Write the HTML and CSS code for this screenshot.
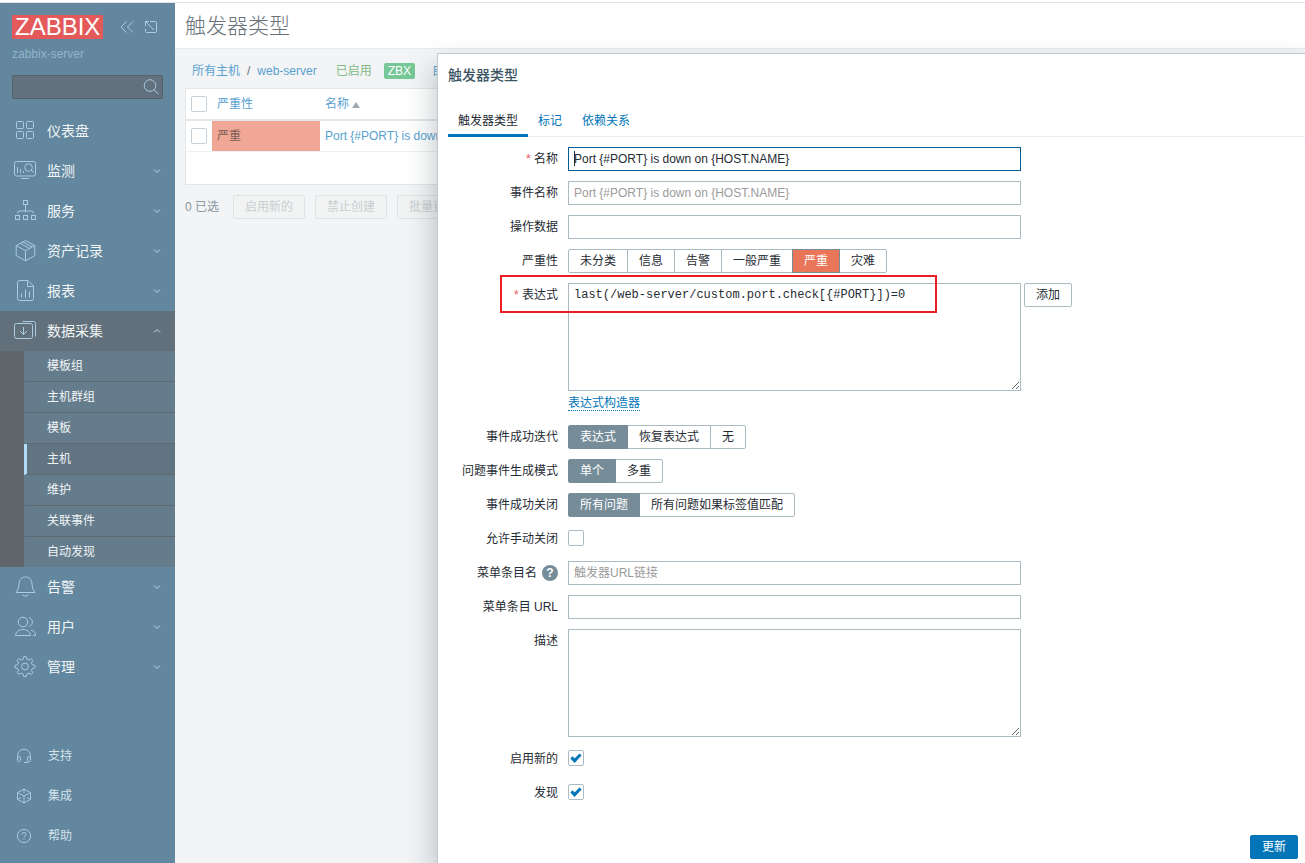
FILE: index.html
```html
<!DOCTYPE html>
<html lang="zh-CN">
<head>
<meta charset="utf-8">
<title>触发器类型</title>
<link rel="stylesheet" href="styles.css">
</head>
<body>
<div class="app">
  <aside class="sidebar">
    <div class="brand">
      <a class="logo" href="#">ZABBIX</a>
      <button class="icon-button" type="button" aria-label="收起">
        <svg width="16" height="16" viewBox="0 0 16 16"><path d="M7.500 2.500 2 8l5.500 5.500M14 2.500 8.500 8l5.500 5.500"/></svg>
      </button>
      <button class="icon-button" type="button" aria-label="隐藏">
        <svg width="16" height="16" viewBox="0 0 16 16"><path d="M7 2.500h5.500q1 0 1 1v9q0 1-1 1h-9q-1 0-1-1V10M11 11 2.500 2.500M2.500 7V2.500H6"/></svg>
      </button>
    </div>
    <div class="server-name">zabbix-server</div>
    <form class="search">
      <input type="text" aria-label="搜索">
      <button type="button" aria-label="搜索">
        <svg width="18" height="18" viewBox="0 0 18 18"><circle cx="8" cy="7.500" r="5.800"/><path d="m12 12 4.500 4"/></svg>
      </button>
    </form>

    <nav class="menu">
      <a class="menu-item" href="#">
        <svg class="menu-icon" viewBox="0 0 22 22"><rect x="2.500" y="1.500" width="7" height="7" rx="1"/><rect x="12.500" y="1.500" width="7" height="7" rx="1"/><rect x="2.500" y="11.500" width="7" height="7" rx="1"/><rect x="12.500" y="11.500" width="7" height="7" rx="1"/></svg>
        <span>仪表盘</span>
      </a>
      <a class="menu-item" href="#">
        <svg class="menu-icon" viewBox="0 0 22 22"><rect x=".5" y="1.500" width="21" height="14.500" rx="2"/><path d="M7 18.500h8M3.500 7v6M6.500 9v4M9.500 11v2M17.500 10l2 2.500"/><circle cx="14.500" cy="7.500" r="3.800"/></svg>
        <span>监测</span>
        <svg class="chevron" viewBox="0 0 8 8"><path d="m1 2.500 3 3 3-3"/></svg>
      </a>
      <a class="menu-item" href="#">
        <svg class="menu-icon" viewBox="0 0 22 22"><rect x="9.500" y=".5" width="4" height="4"/><rect x="1.500" y="15.500" width="4" height="4"/><rect x="9.500" y="15.500" width="4" height="4"/><rect x="17.500" y="15.500" width="4" height="4"/><path d="M11.500 4.500v8M3.500 13.500v-.5q0-2 2-2h12q2 0 2 2v.5"/></svg>
        <span>服务</span>
        <svg class="chevron" viewBox="0 0 8 8"><path d="m1 2.500 3 3 3-3"/></svg>
      </a>
      <a class="menu-item" href="#">
        <svg class="menu-icon" viewBox="0 0 22 22"><path d="m11.500 .6 9.300 5v10l-9.300 5.200-9.300-5.200v-10zM2.200 5.600l9.300 5 9.300-5M11.500 10.600v10M6.200 3.400 15.500 8.400M9 2l9.200 5"/></svg>
        <span>资产记录</span>
        <svg class="chevron" viewBox="0 0 8 8"><path d="m1 2.500 3 3 3-3"/></svg>
      </a>
      <a class="menu-item" href="#">
        <svg class="menu-icon" viewBox="0 0 22 22"><path d="M5.500 .5h8.500l5.500 5.500v12.500q0 2-2 2h-12q-2 0-2-2v-16q0-2 2-2zM13.500 1v5.500h6M7.500 13.500v4M11.500 9.500v8M15.500 11.500v6"/></svg>
        <span>报表</span>
        <svg class="chevron" viewBox="0 0 8 8"><path d="m1 2.500 3 3 3-3"/></svg>
      </a>
      <a class="menu-item menu-item-open" href="#">
        <svg class="menu-icon" viewBox="0 0 22 22"><rect x=".5" y="3.500" width="18" height="15" rx="2"/><path d="M8.500 1.500h11q2 0 2 2v13M9.500 7v7.500M6 11l3.500 3.500 3.500-3.500"/></svg>
        <span>数据采集</span>
        <svg class="chevron" viewBox="0 0 8 8"><path d="m1 5.500 3-3 3 3"/></svg>
      </a>
      <div class="submenu">
        <a href="#">模板组</a>
        <a href="#">主机群组</a>
        <a href="#">模板</a>
        <a class="selected" href="#">主机</a>
        <a href="#">维护</a>
        <a href="#">关联事件</a>
        <a href="#">自动发现</a>
      </div>
      <a class="menu-item" href="#">
        <svg class="menu-icon" viewBox="0 0 22 22"><path d="M2 16.500h19c-2-2.500-2.500-4-3-8.500-.5-5-3-7-6.500-7s-6 2-6.500 7c-.5 4.500-1 6-3 8.500zM8.500 19q3 2.500 6 0"/></svg>
        <span>告警</span>
        <svg class="chevron" viewBox="0 0 8 8"><path d="m1 2.500 3 3 3-3"/></svg>
      </a>
      <a class="menu-item" href="#">
        <svg class="menu-icon" viewBox="0 0 22 22"><circle cx="9" cy="6" r="4.800"/><path d="M1.500 19.500c.5-4 3.500-6 7.500-6s7 2 7.500 6zM15 1.500c4.500 1.500 4.500 7.500 0 9M17 14c3 .8 4.500 2.500 4.500 5.500h-2.500"/></svg>
        <span>用户</span>
        <svg class="chevron" viewBox="0 0 8 8"><path d="m1 2.500 3 3 3-3"/></svg>
      </a>
      <a class="menu-item" href="#">
        <svg class="menu-icon" viewBox="0 0 22 22"><circle cx="11" cy="10.500" r="3.400"/><path d="M9.800 .6h2.400l.7 2.700 1.900.8 2.400-1.400 1.700 1.700-1.400 2.400.8 1.900 2.700.7v2.400l-2.700.7-.8 1.900 1.400 2.400-1.700 1.700-2.400-1.400-1.900.8-.7 2.700H9.800l-.7-2.700-1.900-.8-2.400 1.400-1.700-1.700 1.400-2.400-.8-1.900-2.700-.7V9.400l2.700-.7.800-1.900-1.400-2.400 1.700-1.700 2.400 1.400 1.900-.8z"/></svg>
        <span>管理</span>
        <svg class="chevron" viewBox="0 0 8 8"><path d="m1 2.500 3 3 3-3"/></svg>
      </a>
    </nav>

    <nav class="support-menu">
      <a href="#">
        <svg viewBox="0 0 16 16"><path d="M1.700 11V7.500a6.300 6.300 0 0 1 12.600 0V11M1.500 9.500q0-1 1-1h1q1 0 1 1v3q0 1-1 1h-1q-1 0-1-1zM11.500 9.500q0-1 1-1h1q1 0 1 1v3q0 1-1 1h-1q-1 0-1-1zM13 13.500q-1.500 1.500-5 1"/></svg>
        <span>支持</span>
      </a>
      <a href="#">
        <svg viewBox="0 0 16 16"><path d="m8 1 6.500 3.500v7L8 15l-6.500-3.500v-7zM1.500 4.500 8 8l6.500-3.500M8 8v7M8 1v4M1.500 11.500 5 9.700M14.500 11.500 11 9.700"/></svg>
        <span>集成</span>
      </a>
      <a href="#">
        <svg viewBox="0 0 16 16"><circle cx="8" cy="8" r="6.600"/><path d="M6 6.500q0-2 2-2t2 1.800c0 1.500-2 1.500-2 3.200M8 10.500v1.300"/></svg>
        <span>帮助</span>
      </a>
    </nav>
  </aside>

  <main class="page">
    <header class="page-header"><h1>触发器类型</h1></header>
    <div class="content">
      <div class="breadcrumbs">
        <a href="#">所有主机</a>
        <span class="slash">/</span>
        <a href="#">web-server</a>
        <span class="status">已启用</span>
        <span class="badge">ZBX</span>
        <a href="#">自</a>
      </div>
      <div class="table-box">
        <table>
          <thead>
            <tr>
              <th class="col-check"><input class="check" type="checkbox" aria-label="全选"></th>
              <th class="col-severity"><a href="#">严重性</a></th>
              <th><a href="#">名称 <span class="sort"></span></a></th>
            </tr>
          </thead>
          <tbody>
            <tr>
              <td class="col-check"><input class="check" type="checkbox" aria-label="选择"></td>
              <td class="severity-high">严重</td>
              <td><a href="#">Port {#PORT} is down on {HOST.NAME}</a></td>
            </tr>
          </tbody>
        </table>
      </div>
      <div class="bulk-actions">
        <span>0 已选</span>
        <button type="button" disabled>启用新的</button>
        <button type="button" disabled>禁止创建</button>
        <button type="button" disabled>批量更新</button>
      </div>
    </div>
  </main>

  <section class="dialog" role="dialog" aria-labelledby="dialog-title">
    <h2 id="dialog-title">触发器类型</h2>
    <div class="tabs">
      <button class="tab tab-active" type="button">触发器类型</button>
      <button class="tab" type="button">标记</button>
      <button class="tab" type="button">依赖关系</button>
    </div>
    <form class="form">
      <div class="row">
        <label class="required" for="name">名称</label>
        <div class="field caret"><input class="text focused" id="name" type="text" value="Port {#PORT} is down on {HOST.NAME}"></div>
      </div>
      <div class="row">
        <label for="event-name">事件名称</label>
        <div class="field"><input class="text" id="event-name" type="text" placeholder="Port {#PORT} is down on {HOST.NAME}"></div>
      </div>
      <div class="row">
        <label for="opdata">操作数据</label>
        <div class="field"><input class="text" id="opdata" type="text"></div>
      </div>
      <div class="row">
        <span class="label" id="severity-label">严重性</span>
        <div class="segments" role="radiogroup" aria-labelledby="severity-label">
          <label><input type="radio" name="severity"><span>未分类</span></label>
          <label><input type="radio" name="severity"><span>信息</span></label>
          <label><input type="radio" name="severity"><span>告警</span></label>
          <label><input type="radio" name="severity"><span>一般严重</span></label>
          <label><input class="high" type="radio" name="severity" checked><span>严重</span></label>
          <label><input type="radio" name="severity"><span>灾难</span></label>
        </div>
      </div>
      <div class="row highlighted">
        <label class="required" for="expression">表达式</label>
        <div class="expression">
          <textarea class="text mono" id="expression" spellcheck="false">last(/web-server/custom.port.check[{#PORT}])=0</textarea>
          <button class="button" type="button">添加</button>
        </div>
        <div class="builder"><a href="#">表达式构造器</a></div>
      </div>
      <div class="row">
        <span class="label" id="recovery-label">事件成功迭代</span>
        <div class="segments" role="radiogroup" aria-labelledby="recovery-label">
          <label><input type="radio" name="recovery" checked><span>表达式</span></label>
          <label><input type="radio" name="recovery"><span>恢复表达式</span></label>
          <label><input type="radio" name="recovery"><span>无</span></label>
        </div>
      </div>
      <div class="row">
        <span class="label" id="mode-label">问题事件生成模式</span>
        <div class="segments" role="radiogroup" aria-labelledby="mode-label">
          <label><input type="radio" name="mode" checked><span>单个</span></label>
          <label><input type="radio" name="mode"><span>多重</span></label>
        </div>
      </div>
      <div class="row">
        <span class="label" id="close-label">事件成功关闭</span>
        <div class="segments" role="radiogroup" aria-labelledby="close-label">
          <label><input type="radio" name="close" checked><span>所有问题</span></label>
          <label><input type="radio" name="close"><span>所有问题如果标签值匹配</span></label>
        </div>
      </div>
      <div class="row">
        <label for="manual-close">允许手动关闭</label>
        <div class="check-field"><input class="check" id="manual-close" type="checkbox"></div>
      </div>
      <div class="row">
        <div class="label with-help"><label for="url-name">菜单条目名</label><button class="help" type="button" aria-label="帮助">?</button></div>
        <div class="field"><input class="text" id="url-name" type="text" placeholder="触发器URL链接"></div>
      </div>
      <div class="row">
        <label for="url">菜单条目 URL</label>
        <div class="field"><input class="text" id="url" type="text"></div>
      </div>
      <div class="row">
        <label for="description">描述</label>
        <div class="field"><textarea class="text" id="description"></textarea></div>
      </div>
      <div class="row">
        <label for="enabled">启用新的</label>
        <div class="check-field"><input class="check" id="enabled" type="checkbox" checked></div>
      </div>
      <div class="row">
        <label for="discover">发现</label>
        <div class="check-field"><input class="check" id="discover" type="checkbox" checked></div>
      </div>
    </form>
    <footer class="dialog-footer"><button class="button primary" type="button">更新</button></footer>
  </section>
</div>
</body>
</html>
```

FILE: styles.css
```css
*,
*::before,
*::after {
  box-sizing: border-box;
}

body {
  margin: 0;
  padding-top: 2px;
  background: #fff;
  color: #1f2c33;
  font: 12px/16px "Liberation Sans", "Noto Sans CJK SC", sans-serif;
}

a {
  color: inherit;
  text-decoration: none;
}

button,
input,
textarea {
  font: inherit;
  color: inherit;
  margin: 0;
}

svg {
  fill: none;
  stroke: currentColor;
  flex: none;
}

.app {
  position: relative;
  display: flex;
  min-height: calc(100vh - 2px);
  border-top: 1px solid #dfe2e5;
  overflow: hidden;
}

/* Sidebar */
.sidebar {
  flex: none;
  width: 175px;
  display: flex;
  flex-direction: column;
  padding: 12px 0 7px;
  background: #62879e;
  color: #a9cde3;
}

.brand {
  display: flex;
  align-items: center;
  padding: 0 16px 0 12px;
}

.logo {
  margin-right: auto;
  padding: 0 3px;
  background: #e45959;
  color: #fff;
  font-size: 24px;
  line-height: 24px;
}

.icon-button {
  display: flex;
  margin-left: 8px;
  padding: 0;
  border: 0;
  background: none;
}

.server-name {
  margin: 7px 12px 13px;
  color: #94b6ca;
}

.search {
  display: flex;
  align-items: center;
  height: 24px;
  margin: 0 12px 12px;
  border: 1px solid #5a6065;
  border-radius: 2px;
  background: #61717d;
}

.search input {
  flex: 1;
  width: 0;
  border: 0;
  background: none;
  outline: 0;
}

.search button {
  display: flex;
  padding: 0 2px;
  border: 0;
  background: none;
}

.menu-item {
  display: flex;
  align-items: center;
  gap: 11px;
  height: 40px;
  padding: 0 14px;
  font-size: 14px;
}

.menu-item span {
  color: #f1f5f7;
}

.menu-icon {
  width: 22px;
  height: 22px;
}

.chevron {
  width: 8px;
  height: 8px;
  margin-left: auto;
  color: #c5dbe8;
}

.menu-item-open {
  background: #61707b;
}

.submenu {
  border-left: 24px solid #5f676b;
  background: #647c8b;
  color: #f1f5f7;
}

.submenu a {
  display: block;
  padding: 0 20px;
  border-bottom: 1px solid #5e6a71;
  border-left: 3px solid transparent;
  line-height: 30px;
  background-clip: padding-box;
}

.submenu a:last-child {
  border-bottom: 0;
}

.submenu .selected {
  border-left-color: #b0dcf8;
  background-color: #617482;
}

.support-menu {
  margin-top: auto;
  color: #d4e3ec;
}

.support-menu a {
  display: flex;
  align-items: center;
  gap: 16px;
  height: 40px;
  padding: 0 16px;
}

.support-menu svg {
  width: 16px;
  height: 16px;
  color: #a9cde3;
}

/* Page behind the dialog */
.page {
  flex: 1;
  min-width: 0;
  background: #f2f4f6;
}

.page-header {
  padding: 8px 10px;
  border-bottom: 1px solid #e7eaec;
  background: #fff;
}

h1 {
  margin: 0;
  color: #687278;
  font-size: 21px;
  font-weight: 300;
  line-height: 29px;
}

.content {
  padding: 10px;
  color: #8a979e;
}

.breadcrumbs {
  display: flex;
  align-items: center;
  height: 24px;
  margin-bottom: 5px;
  padding: 0 7px;
  white-space: nowrap;
}

.content a {
  color: #58a1cf;
}

.slash {
  margin: 0 7px;
  color: #687278;
}

.status {
  margin: 0 12px 0 19px;
  color: #83ba86;
}

.badge {
  margin-right: 17px;
  padding: 0 4px;
  border-radius: 2px;
  background: #76c897;
  color: #fff;
}

.table-box {
  padding-bottom: 32px;
  border: 1px solid #e3e7e9;
  background: #fff;
}

table {
  width: 100%;
  border-collapse: separate;
  border-spacing: 0;
  table-layout: fixed;
}

th,
td {
  height: 31px;
  padding: 0 5px;
  border-bottom: 1px solid #eef0f1;
  font-weight: normal;
  text-align: left;
  white-space: nowrap;
}

th {
  height: 32px;
  border-bottom: 2px solid #e3e7e9;
}

.col-check {
  width: 26px;
}

.col-check .check {
  border-color: #c6d0d6;
}

.col-severity {
  width: 108px;
}

.severity-high {
  background: #f1a795;
  color: #7b5d56;
}

.sort {
  display: inline-block;
  border: 4px solid transparent;
  border-top: 0;
  border-bottom: 6px solid #9eabb2;
}

.bulk-actions {
  display: flex;
  align-items: center;
  gap: 10px;
  margin-top: 10px;
  white-space: nowrap;
}

.bulk-actions span {
  margin-right: 4px;
}

.bulk-actions button {
  height: 24px;
  padding: 0 11px;
  border: 1px solid #dfe3e5;
  border-radius: 2px;
  background: #f2f3f3;
  color: #c9cfd2;
}

/* Dialog */
.dialog {
  position: absolute;
  top: 50px;
  right: 0;
  bottom: 0;
  left: 437px;
  display: flex;
  flex-direction: column;
  padding: 12px 7px 4px 10px;
  border: 1px solid #c0cacf;
  border-right: 0;
  border-bottom: 0;
  background: #fff;
  box-shadow: 0 16px 28px rgba(50, 70, 75, 0.35);
}

h2 {
  margin: 0 0 22px;
  color: #3c5563;
  font-size: 14px;
  font-weight: 500;
  line-height: 18px;
}

.tabs {
  display: flex;
  margin-right: -7px;
  border-bottom: 1px solid #ebeef0;
}

.tab {
  height: 31px;
  margin-bottom: -1px;
  padding: 2px 10px 0;
  border: 0;
  border-bottom: 3px solid transparent;
  background: none;
  color: #0275b8;
}

.tab-active {
  border-bottom-color: #0275b8;
  color: #1f2c33;
}

.form {
  display: grid;
  gap: 10px;
  margin-top: 10px;
}

.row {
  display: grid;
  grid-template-columns: 110px minmax(0, 1fr);
  column-gap: 10px;
  line-height: 24px;
}

.row > label,
.row > .label {
  text-align: right;
  white-space: nowrap;
}

.required::before {
  content: "* ";
  color: #e45959;
}

.field {
  display: flex;
  max-width: 453px;
}

.text {
  flex: 1;
  width: 100%;
  max-width: 453px;
  height: 24px;
  padding: 0 5px;
  border: 1px solid #acbbc2;
  border-radius: 0;
  background: #fff;
  outline: 0;
}

.focused {
  border-color: #005d93;
}

.caret {
  position: relative;
}

.caret::after {
  content: "";
  position: absolute;
  top: 4px;
  left: 6px;
  width: 1px;
  height: 15px;
  background: #1f2c33;
}

textarea.text {
  height: 108px;
  padding: 4px 5px;
  line-height: 14px;
  resize: both;
}

.mono {
  font-family: "Liberation Mono", "Noto Sans CJK SC", monospace;
}

::placeholder {
  color: #9b9b9b;
  opacity: 1;
}

.segments {
  display: flex;
}

.segments label {
  position: relative;
  margin-left: -1px;
}

.segments label:first-child {
  margin-left: 0;
}

.segments input {
  position: absolute;
  opacity: 0;
}

.segments span {
  display: block;
  padding: 0 11px;
  border: 1px solid #acbbc2;
  line-height: 22px;
  white-space: nowrap;
}

.segments label:first-child span {
  border-radius: 2px 0 0 2px;
}

.segments label:last-child span {
  border-radius: 0 2px 2px 0;
}

.segments input:checked + span {
  position: relative;
  z-index: 1;
  border-color: #768d99;
  background: #768d99;
  color: #fff;
}

.segments .high:checked + span {
  background: #e97659;
}

.expression {
  display: flex;
  align-items: flex-start;
  gap: 3px;
}

.builder {
  grid-column: 2;
  margin-top: 4px;
  line-height: 16px;
  padding-bottom: 4px;
}

.builder a {
  border-bottom: 1px dotted #0275b8;
  color: #0275b8;
}

.highlighted {
  position: relative;
}

.highlighted::after {
  content: "";
  position: absolute;
  top: -8px;
  left: 52px;
  width: 437px;
  height: 38px;
  border: 2px solid #ed1c24;
  pointer-events: none;
}

.button {
  height: 24px;
  padding: 0 11px;
  border: 1px solid #acbbc2;
  border-radius: 2px;
  background: #fff;
  line-height: 22px;
}

.check {
  appearance: none;
  display: block;
  width: 16px;
  height: 16px;
  border: 1px solid #acbbc2;
  border-radius: 2px;
  background: #fff;
}

.check:checked::before {
  content: "";
  display: block;
  width: 10px;
  height: 6px;
  margin: 3px auto 0;
  border: solid #0275b8;
  border-width: 0 0 3px 3px;
  transform: rotate(-45deg);
}

.check-field {
  padding-top: 3px;
}

.with-help {
  display: flex;
  justify-content: flex-end;
  align-items: center;
  gap: 5px;
}

.help {
  width: 16px;
  height: 16px;
  padding: 0;
  border: 0;
  border-radius: 50%;
  background: #768d99;
  color: #fff;
  font-weight: bold;
  line-height: 16px;
}

.dialog-footer {
  display: flex;
  justify-content: flex-end;
  margin-top: auto;
}

.primary {
  border-color: #0275b8;
  background: #0275b8;
  color: #fff;
}
```
